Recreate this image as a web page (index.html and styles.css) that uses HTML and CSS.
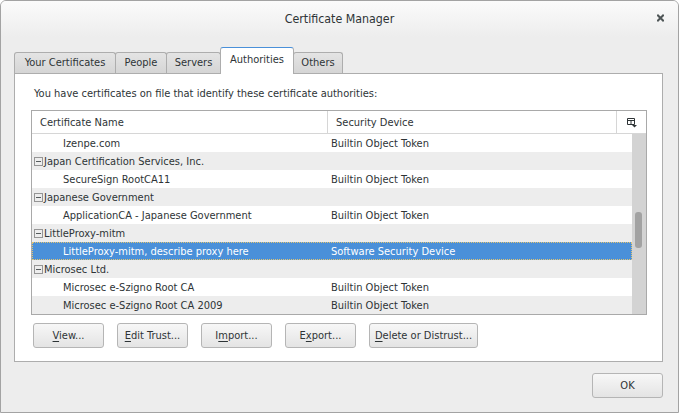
FILE: index.html
```html
<!DOCTYPE html>
<html>
<head>
<meta charset="utf-8">
<link rel="stylesheet" href="styles.css">
</head>
<body>
<div class="window">
  <div class="titlebar">
    <span></span>
    <span class="title">Certificate Manager</span>
    <span class="close"><svg width="7" height="8" viewBox="0 0 7 8"><path d="M1 1.5 L6 6.5 M6 1.5 L1 6.5" stroke="#4f5657" stroke-width="2.1" stroke-linecap="square"/></svg></span>
  </div>
  <div class="content">
    <div class="tabs">
      <div class="tab t-your">Your Certificates</div>
      <div class="tab t-people">People</div>
      <div class="tab t-servers">Servers</div>
      <div class="tab active t-auth">Authorities</div>
      <div class="tab t-others">Others</div>
    </div>
    <div class="panel">
      <p class="intro">You have certificates on file that identify these certificate authorities:</p>
      <div class="tree">
        <div class="thead">
          <div class="th th1">Certificate Name</div>
          <div class="th th2">Security Device</div>
          <div class="th th3"><svg width="10" height="10" viewBox="0 0 10 10"><path d="M0.5 0.5 H7.5 V6.5 H0.5 Z M0.5 2.5 H7.5 M4 2.5 V6.5" fill="none" stroke="#2e3436" stroke-width="1"/><path d="M5 7 H10 L7.5 9.5 Z" fill="#2e3436"/></svg></div>
        </div>
        <div class="tbody">
          <div class="rows">
            <div class="row"><div class="c1 child">Izenpe.com</div><div class="c2">Builtin Object Token</div></div>
            <div class="row alt"><div class="c1 parent"><span class="twisty"></span>Japan Certification Services, Inc.</div><div class="c2"></div></div>
            <div class="row"><div class="c1 child">SecureSign RootCA11</div><div class="c2">Builtin Object Token</div></div>
            <div class="row alt"><div class="c1 parent"><span class="twisty"></span>Japanese Government</div><div class="c2"></div></div>
            <div class="row"><div class="c1 child">ApplicationCA - Japanese Government</div><div class="c2">Builtin Object Token</div></div>
            <div class="row alt"><div class="c1 parent"><span class="twisty"></span>LittleProxy-mitm</div><div class="c2"></div></div>
            <div class="row selected"><div class="c1 child">LittleProxy-mitm, describe proxy here</div><div class="c2">Software Security Device</div></div>
            <div class="row alt"><div class="c1 parent"><span class="twisty"></span>Microsec Ltd.</div><div class="c2"></div></div>
            <div class="row"><div class="c1 child">Microsec e-Szigno Root CA</div><div class="c2">Builtin Object Token</div></div>
            <div class="row alt"><div class="c1 child">Microsec e-Szigno Root CA 2009</div><div class="c2">Builtin Object Token</div></div>
          </div>
          <div class="scrollbar"><div class="thumb"></div></div>
        </div>
      </div>
      <div class="actions">
        <button class="btn"><u>V</u>iew...</button>
        <button class="btn"><u>E</u>dit Trust...</button>
        <button class="btn">I<u>m</u>port...</button>
        <button class="btn">E<u>x</u>port...</button>
        <button class="btn wide"><u>D</u>elete or Distrust...</button>
      </div>
    </div>
    <div class="footer">
      <button class="btn">OK</button>
    </div>
  </div>
</div>
</body>
</html>
```
FILE: styles.css
```css
* { box-sizing: border-box; }
body {
  margin: 0;
  font-family: "DejaVu Sans Condensed", "DejaVu Sans", sans-serif;
  font-stretch: condensed;
  font-size: 11px;
  color: #2e3436;
  background: #ffffff;
}
.window {
  width: 679px;
  height: 413px;
  border: 1px solid #a3a3a3;
  border-radius: 6px 6px 0 0;
  background: #ededed;
  display: flex;
  flex-direction: column;
  overflow: hidden;
}
.titlebar {
  height: 36px;
  flex: none;
  display: grid;
  grid-template-columns: 1fr auto 1fr;
  align-items: center;
  background: linear-gradient(#fbfbfb, #ededed);
  font-size: 12.3px;
  color: #2e3436;
}
.close {
  justify-self: end;
  margin-right: 14px;
  display: flex;
  margin-bottom: 2px;
}
.content {
  flex: 1;
  padding: 10px 15px 0 13px;
  display: flex;
  flex-direction: column;
}
.tabs {
  display: flex;
  align-items: flex-end;
  height: 27px;
  margin-bottom: -1px;
  position: relative;
  z-index: 1;
}
.tab {
  height: 21px;
  line-height: 20px;
  margin-bottom: 1px;
  text-align: center;
  border: 1px solid #adadad;
  border-bottom: none;
  border-radius: 3px 3px 0 0;
  background: linear-gradient(#e4e4e4, #d5d5d5);
  margin-right: -1px;
}
.t-your { width: 102px; }
.t-people { width: 52px; }
.t-servers { width: 55px; }
.t-auth { width: 74px; }
.t-others { width: 50px; }
.tab.active {
  height: 27px;
  line-height: 24px;
  margin-bottom: 0;
  background: #ffffff;
  border-top: 1px solid #4a90d9;
}
.panel {
  background: #ffffff;
  border: 1px solid #adadad;
  padding: 12px 15px 13px 16px;
}
.intro {
  margin: 0 0 8px;
  padding-left: 3px;
  line-height: 16px;
}
.tree {
  border: 1px solid #a9a9a9;
}
.thead {
  display: flex;
  height: 23px;
  border-bottom: 1px solid #d6d6d6;
  padding-top: 2px;
  line-height: 20px;
}
.th { padding-left: 8px; }
.th1 { width: 296px; border-right: 1px solid #d6d6d6; margin-top: -2px; padding-top: 2px; }
.th2 { width: 289px; border-right: 1px solid #d6d6d6; margin-top: -2px; padding-top: 2px; }
.th3 { width: 29px; padding-left: 10px; padding-top: 5px; line-height: 0; }
.tbody { display: flex; }
.rows { flex: 1; }
.row {
  display: flex;
  height: 18px;
  padding-top: 1px;
  line-height: 17px;
  background: #ffffff;
}
.row.alt { background: #ededed; }
.row.selected {
  background: #4a90d9;
  color: #ffffff;
  outline: 1px dotted #e2c470;
  outline-offset: -1px;
}
.c1 { width: 296px; display: flex; align-items: center; white-space: nowrap; }
.c1.child { padding-left: 31px; }
.c1.parent { padding-left: 2px; }
.c2 { padding-left: 3px; }
.twisty {
  width: 9px;
  height: 9px;
  border: 1px solid #959595;
  margin-right: 1px;
  display: flex;
  align-items: center;
  justify-content: center;
}
.twisty::after {
  content: "";
  width: 5px;
  height: 1px;
  background: #555b5c;
}
.scrollbar {
  width: 14px;
  background: #d3d3d3;
  padding: 78px 3px 0 3px;
}
.thumb {
  width: 7px;
  height: 36px;
  border-radius: 3px;
  background: #a2a2a2;
}
.actions {
  display: flex;
  gap: 13px;
  margin-top: 8px;
  padding-left: 2px;
}
.btn {
  width: 71px;
  height: 25px;
  border: 1px solid #b5b5b5;
  border-radius: 3px;
  background: linear-gradient(#f7f7f7, #e4e4e4);
  font: inherit;
  color: #2e3436;
  padding: 0;
}
.btn.wide { width: 109px; }
.btn u { text-decoration: underline; text-underline-offset: 2px; }
.footer {
  display: flex;
  justify-content: flex-end;
  padding-top: 11px;
}
```
